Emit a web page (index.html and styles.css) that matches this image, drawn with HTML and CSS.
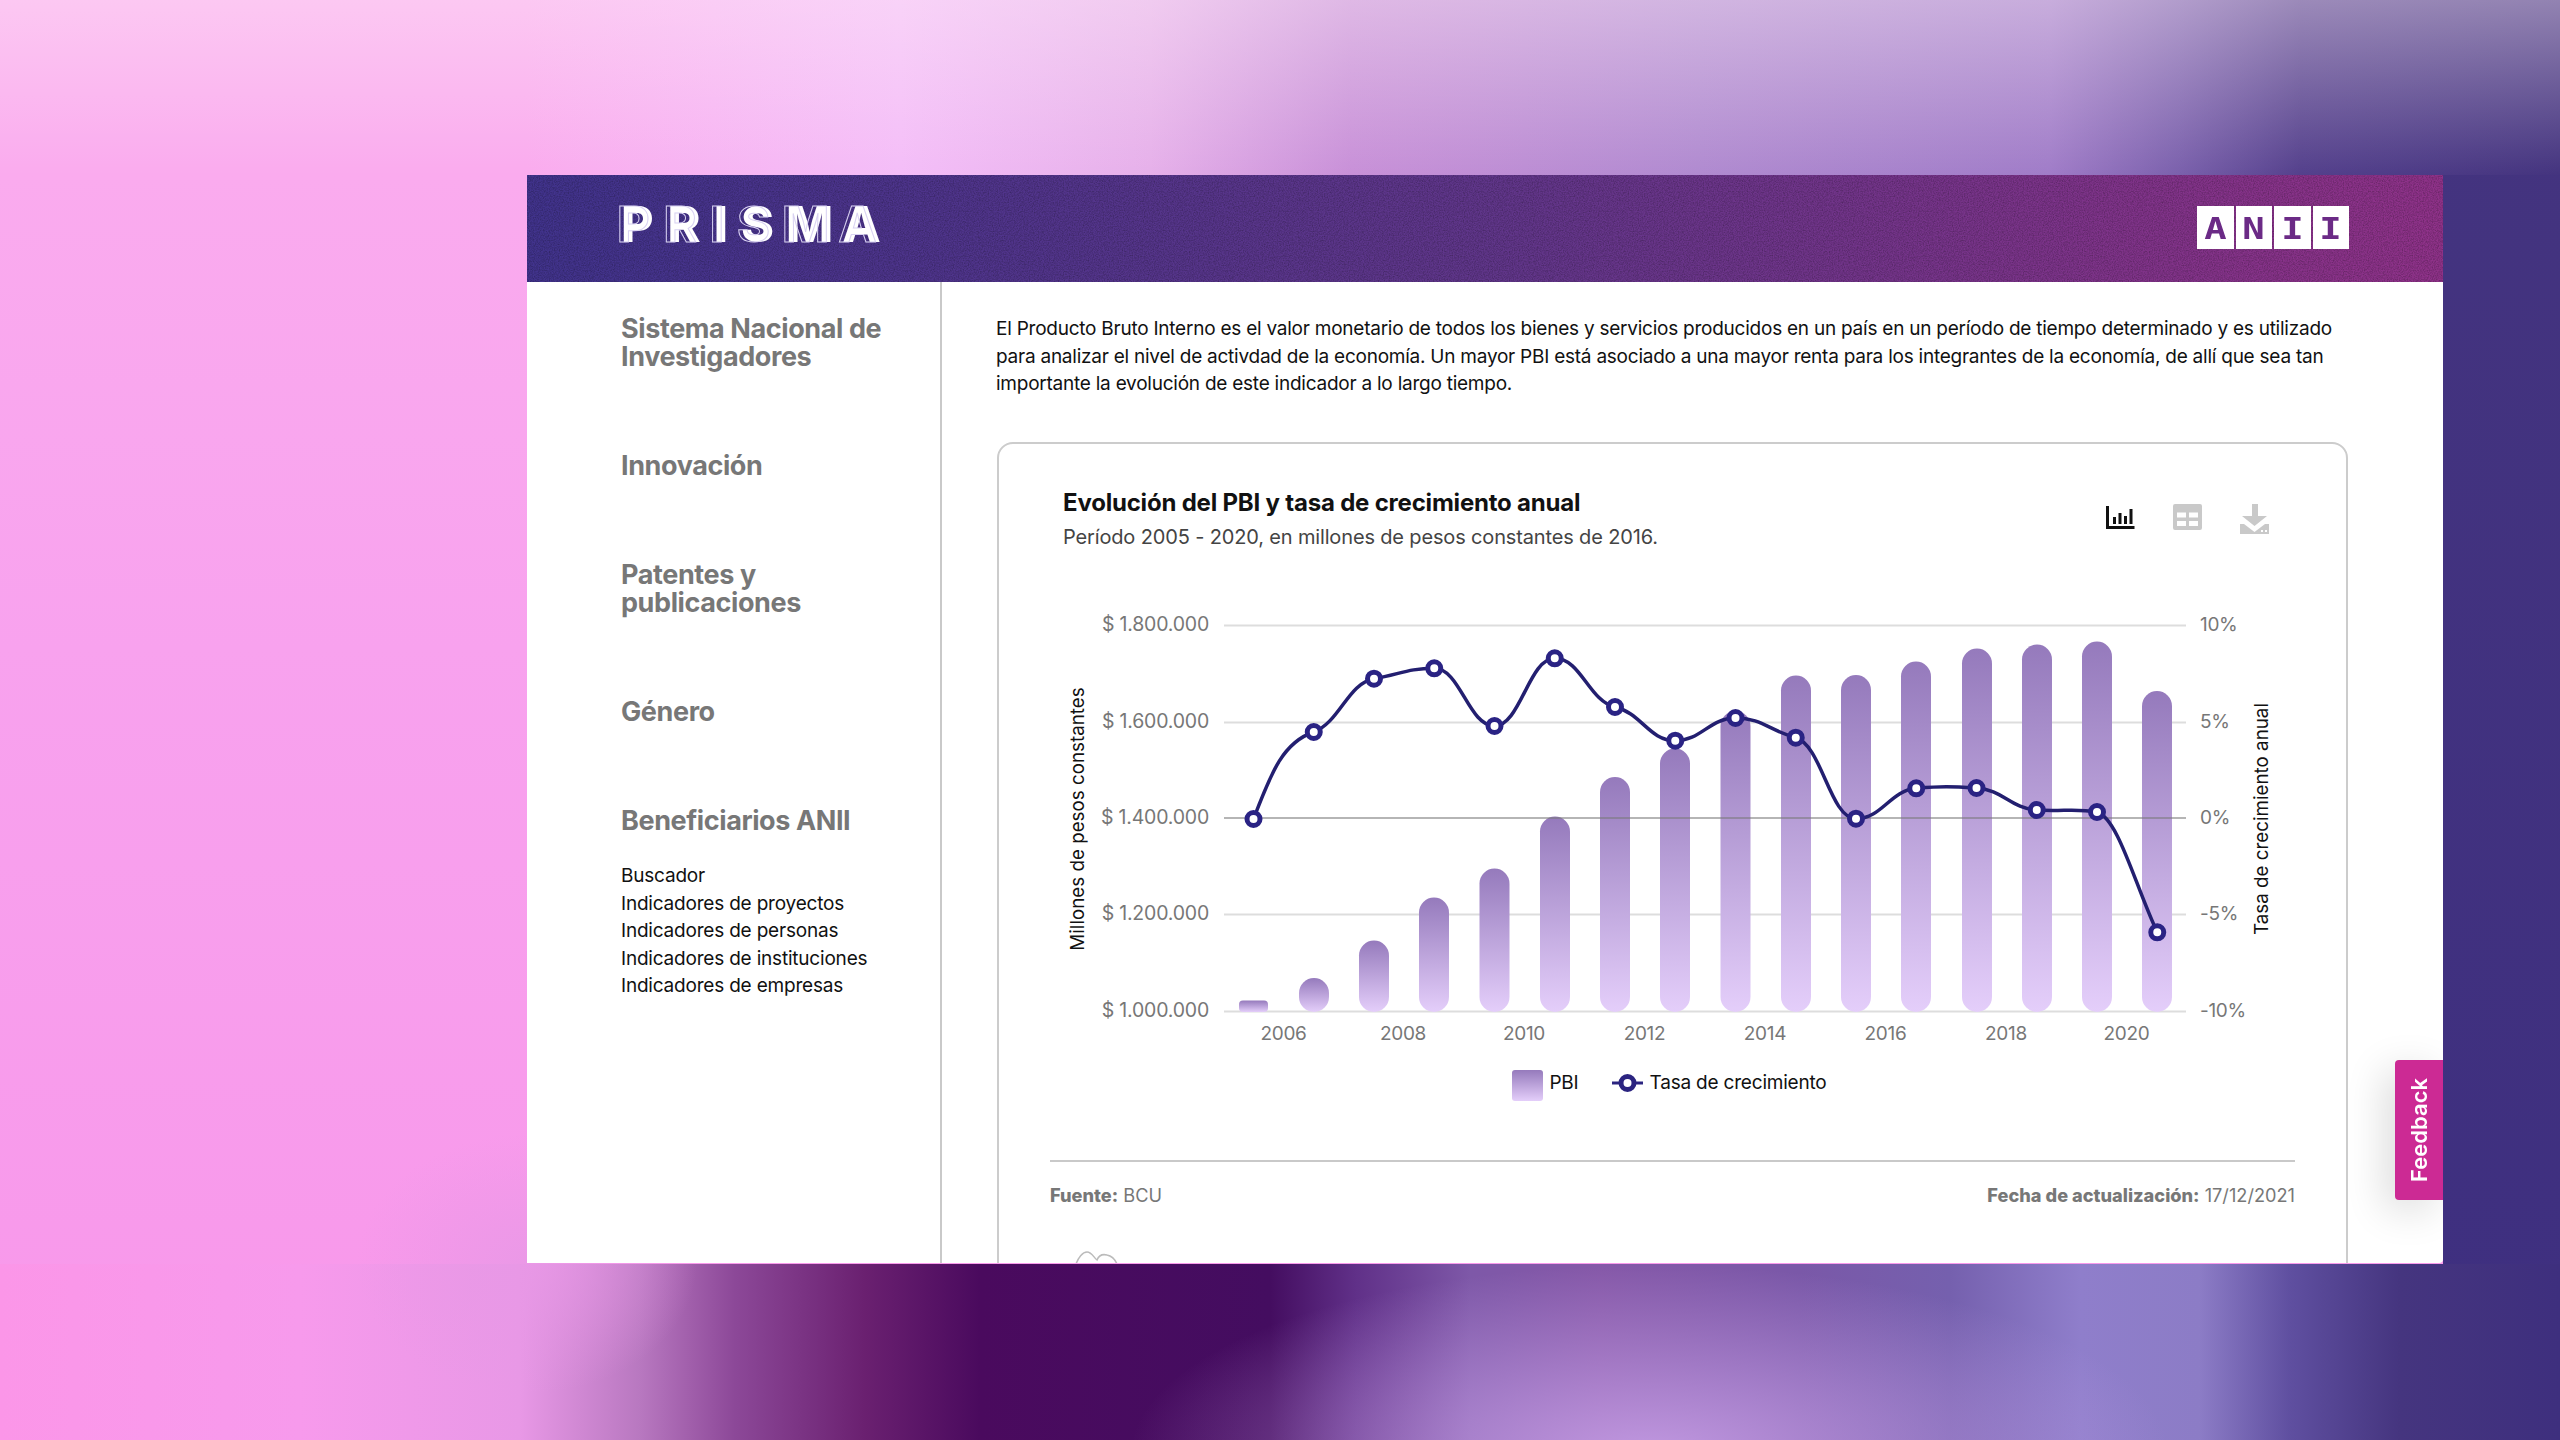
FILE: index.html
```html
<!DOCTYPE html>
<html lang="es">
<head>
<meta charset="utf-8">
<title>PRISMA</title>
<link rel="stylesheet" href="styles.css">
</head>
<body>
<div class="desktop">
  <div class="window">
    <header class="topbar">
      <svg class="grain" width="1916" height="107"><filter id="noise"><feTurbulence type="fractalNoise" baseFrequency="0.8" numOctaves="2" stitchTiles="stitch"/><feColorMatrix values="0 0 0 0 0  0 0 0 0 0  0 0 0 0 0  0 0 0 1.6 -0.55"/></filter><rect width="1916" height="107" filter="url(#noise)" opacity="0.3"/></svg>
      <div class="prisma">
        <span class="pl pl-p" data-l="P">P</span><span class="pl pl-r" data-l="R">R</span><span class="pl pl-i" data-l="I">I</span><span class="pl pl-s" data-l="S">S</span><span class="pl pl-m" data-l="M">M</span><span class="pl pl-a" data-l="A">A</span>
      </div>
      <div class="anii"><span><i>A</i></span><span><i>N</i></span><span><i>I</i></span><span><i>I</i></span></div>
    </header>
    <div class="content">
      <nav class="sidebar">
        <h2 class="nav-h">Sistema Nacional de Investigadores</h2>
        <h2 class="nav-h">Innovación</h2>
        <h2 class="nav-h">Patentes y publicaciones</h2>
        <h2 class="nav-h">Género</h2>
        <div>
          <h2 class="nav-h">Beneficiarios ANII</h2>
          <ul class="nav-list">
            <li>Buscador</li>
            <li>Indicadores de proyectos</li>
            <li>Indicadores de personas</li>
            <li>Indicadores de instituciones</li>
            <li>Indicadores de empresas</li>
          </ul>
        </div>
      </nav>
      <main class="main">
        <p class="intro">El Producto Bruto Interno es el valor monetario de todos los bienes y servicios producidos en un país en un período de tiempo determinado y es utilizado para analizar el nivel de activdad de la economía. Un mayor PBI está asociado a una mayor renta para los integrantes de la economía, de allí que sea tan importante la evolución de este indicador a lo largo tiempo.</p>
        <section class="card">
          <div class="card-head">
            <div>
              <h1 class="card-title">Evolución del PBI y tasa de crecimiento anual</h1>
              <p class="card-sub">Período 2005 - 2020, en millones de pesos constantes de 2016.</p>
            </div>
            <div class="tools">
              <svg class="tool" width="29" height="26" viewBox="0 0 29 26"><path d="M1.500 2v21.500H28.500" fill="none" stroke="#111" stroke-width="3"/><path d="M7 13h3v7H7zM12.500 9h3v11h-3zM18 12h3v8h-3zM23.500 5h3v15h-3z" fill="#111"/></svg>
              <svg class="tool" width="29" height="26" viewBox="0 0 29 26"><path fill-rule="evenodd" d="M2 0h25a2 2 0 0 1 2 2v22a2 2 0 0 1-2 2H2a2 2 0 0 1-2-2V2a2 2 0 0 1 2-2zM4 8.500v5h9v-5zM16 8.500v5h9v-5zM4 17v5h9v-5zM16 17v5h9v-5z" fill="#c9c9c9"/></svg>
              <svg class="tool" width="29" height="30" viewBox="0 0 29 30"><path d="M12 0h6v12h9l-12.500 10L2 12h10z" fill="#c9c9c9"/><path fill-rule="evenodd" d="M0 20h4l10.500 8 10.500-8h4v10H0zM21 26v2h2v-2zM25 26v2h2v-2z" fill="#c9c9c9"/></svg>
            </div>
          </div>
          <svg class="chart" width="1244" height="450" viewBox="1050 600 1244 450">
            <defs>
              <linearGradient id="bar" x1="0" y1="0" x2="0" y2="1">
                <stop offset="0" stop-color="#957abc"/>
                <stop offset="1" stop-color="#e4cefa"/>
              </linearGradient>
            </defs>
            <g class="grid">
              <line x1="1224" x2="2186" y1="625.500" y2="625.500"/>
              <line x1="1224" x2="2186" y1="722.500" y2="722.500"/>
              <line x1="1224" x2="2186" y1="914.500" y2="914.500"/>
              <line x1="1224" x2="2186" y1="1011.500" y2="1011.500"/>
            </g>
            <g fill="url(#bar)">
              <rect x="1239" y="1000.500" width="29" height="11.500" rx="4"/>
              <rect x="1299" y="978" width="30" height="34" rx="15"/>
              <rect x="1359" y="940.500" width="30" height="71.500" rx="15"/>
              <rect x="1419" y="897.500" width="30" height="114.500" rx="15"/>
              <rect x="1479.500" y="868.500" width="30" height="143.500" rx="15"/>
              <rect x="1540" y="816.500" width="30" height="195.500" rx="15"/>
              <rect x="1600" y="777" width="30" height="235" rx="15"/>
              <rect x="1660" y="748.500" width="30" height="263.500" rx="15"/>
              <rect x="1720.500" y="711" width="30" height="301" rx="15"/>
              <rect x="1781" y="675.500" width="30" height="336.500" rx="15"/>
              <rect x="1841" y="675" width="30" height="337" rx="15"/>
              <rect x="1901" y="661.500" width="30" height="350.500" rx="15"/>
              <rect x="1962" y="648.500" width="30" height="363.500" rx="15"/>
              <rect x="2022" y="644.500" width="30" height="367.500" rx="15"/>
              <rect x="2082" y="641.500" width="30" height="370.500" rx="15"/>
              <rect x="2142" y="691" width="30" height="321" rx="15"/>
            </g>
            <line class="zero" x1="1224" x2="2186" y1="818" y2="818"/>
            <path class="rate" d="M1253.500 819C1272 770 1284 742 1313.750 732C1339.750 722.200 1348 683.200 1374 678.700C1400 674.200 1408.250 668.300 1434.250 668.300C1460.250 668.300 1468.500 726 1494.500 726C1520.500 726 1528.750 658.300 1554.750 658.300C1580.750 658.300 1589 701.200 1615 707C1641 712.800 1649.250 740.700 1675.250 740.700C1701.250 740.700 1709.500 718 1735.500 718C1761.500 718 1769.750 730.700 1795.750 737.700C1821.750 744.700 1830 818.700 1856 818.700C1882 818.700 1890.250 790.300 1916.250 788.300C1942.250 786.300 1950.500 786.500 1976.500 788C2002.500 789.500 2010.750 808.300 2036.750 810C2062.750 811.700 2075 808 2097 812C2118 818 2135 885 2157.250 932.300"/>
            <g class="dots">
              <circle cx="1253.500" cy="819" r="6.500"/><circle cx="1313.750" cy="732" r="6.500"/><circle cx="1374" cy="678.700" r="6.500"/><circle cx="1434.250" cy="668.300" r="6.500"/><circle cx="1494.500" cy="726" r="6.500"/><circle cx="1554.750" cy="658.300" r="6.500"/><circle cx="1615" cy="707" r="6.500"/><circle cx="1675.250" cy="740.700" r="6.500"/><circle cx="1735.500" cy="718" r="6.500"/><circle cx="1795.750" cy="737.700" r="6.500"/><circle cx="1856" cy="818.700" r="6.500"/><circle cx="1916.250" cy="788.300" r="6.500"/><circle cx="1976.500" cy="788" r="6.500"/><circle cx="2036.750" cy="810" r="6.500"/><circle cx="2097" cy="812" r="6.500"/><circle cx="2157.250" cy="932.300" r="6.500"/>
            </g>
            <g class="ax-l">
              <text x="1209" y="630.500">$ 1.800.000</text>
              <text x="1209" y="727.500">$ 1.600.000</text>
              <text x="1209" y="823.500">$ 1.400.000</text>
              <text x="1209" y="920">$ 1.200.000</text>
              <text x="1209" y="1016.500">$ 1.000.000</text>
            </g>
            <g class="ax-r">
              <text x="2200" y="630.500">10%</text>
              <text x="2200" y="727.500">5%</text>
              <text x="2200" y="823.500">0%</text>
              <text x="2200" y="920">-5%</text>
              <text x="2200" y="1016.500">-10%</text>
            </g>
            <g class="ax-x">
              <text x="1283.500" y="1040">2006</text>
              <text x="1403" y="1040">2008</text>
              <text x="1524" y="1040">2010</text>
              <text x="1644.500" y="1040">2012</text>
              <text x="1765" y="1040">2014</text>
              <text x="1885.500" y="1040">2016</text>
              <text x="2006" y="1040">2018</text>
              <text x="2126.500" y="1040">2020</text>
            </g>
            <text class="ax-title" transform="translate(1084 819) rotate(-90)">Millones de pesos constantes</text>
            <text class="ax-title" transform="translate(2268 819) rotate(-90)">Tasa de crecimiento anual</text>
          </svg>
          <div class="legend">
            <span class="swatch"></span><span class="leg-t">PBI</span>
            <svg class="leg-line" width="31" height="20" viewBox="0 0 31 20"><path d="M0 10h31" stroke="#2b2480" stroke-width="3"/><circle cx="15.500" cy="10" r="6.500" fill="#fff" stroke="#2b2480" stroke-width="5"/></svg>
            <span class="leg-t">Tasa de crecimiento</span>
          </div>
          <div class="foot">
            <span><b>Fuente:</b> BCU</span>
            <span><b>Fecha de actualización:</b> 17/12/2021</span>
          </div>
          <svg class="next" width="46" height="16" viewBox="0 0 46 16"><path d="M1 16C4 6 9 1 13 1C18 1 20 7 23 9C25 4 29 3 33 4C38 5 42 9 44 16" fill="none" stroke="#bbb" stroke-width="1.500"/></svg>
        </section>
      </main>
      <div class="feedback"><span>Feedback</span></div>
    </div>
  </div>
</div>
</body>
</html>
```
FILE: styles.css
```css
* { box-sizing: border-box; }
html, body { margin: 0; padding: 0; }
body { font-family: Inter, "Liberation Sans", sans-serif; color: #111; }
.desktop {
  width: 2560px; height: 1440px; overflow: hidden; padding: 175px 0 0 527px;
  background-repeat: no-repeat;
  background-image:
    radial-gradient(ellipse 520px 190px at 1650px 1455px, rgba(208,168,238,.8) 0%, rgba(208,168,238,0) 100%),
    radial-gradient(ellipse 170px 130px at 527px 1264px, rgba(232,152,230,.85) 0%, rgba(232,152,230,0) 100%),
    linear-gradient(180deg, rgba(255,240,248,.42) 0, rgba(255,240,248,0) 100%),
    linear-gradient(90deg, #faabee 0, #faabee 527px, #f4bdf8 900px, #e6b0ea 1150px, #c890d8 1350px, #b08ad0 1700px, #a07cc8 2050px, #7a60ac 2180px, #54408c 2300px, #44347f 2560px),
    linear-gradient(90deg, #fb96e8 0, #f79aec 300px, #e898e6 520px, #b878c0 640px, #8c4898 735px, #6a2070 865px, #4a0a5e 980px, #440d60 1270px, #603088 1355px, #7e58a8 1470px, #8558a8 1600px, #7a58a8 1800px, #7560ae 1950px, #8f7ecb 2080px, #8c7cc6 2200px, #5f4fa0 2290px, #45357f 2400px, #3e2f7e 2560px),
    linear-gradient(180deg, #44347f 0, #3e2f80 100%),
    linear-gradient(180deg, #faabee 0, #faabee 175px, #f8a2ee 45%, #f897ea 100%);
  background-size:
    100% 100%, 100% 100%, 100% 175px, 100% 175px, 100% 176px, 117px 100%, 100% 100%;
  background-position:
    0 0, 0 0, 0 0, 0 0, 0 1264px, 100% 0, 0 0;
}
.window { width: 1916px; height: 1088px; background: #fff; display: flex; flex-direction: column; overflow: hidden; border-radius: 0 0 4px 0; }
.topbar {
  position: relative;
  height: 107px; flex: none; display: flex; align-items: center; justify-content: space-between;
  padding: 0 94px;
  background: linear-gradient(90deg, #41338c 0%, #60368a 50%, #8f3289 100%);
}
.grain { position: absolute; left: 0; top: 0; display: block; pointer-events: none; }
.prisma { position: relative; display: flex; margin-bottom: 9px; font-size: 50px; font-weight: 800; color: #fff; line-height: 36px; font-family: Inter, sans-serif; }
.pl { position: relative; display: block; }
.pl::before { content: attr(data-l); position: absolute; left: -4px; top: 0; color: transparent; -webkit-text-stroke: 1px #d9d2f2; }
.pl-p { margin-right: 14px; } .pl-r { margin-right: 13px; } .pl-i { margin-right: 13px; } .pl-s { margin-right: 12px; } .pl-m { margin-right: 9px; }
.anii { position: relative; display: flex; gap: 2px; height: 43px; margin-bottom: 2px; }
.anii span { width: 36.500px; background: #fff; color: #6b2a86; display: flex; align-items: center; justify-content: center; font: 700 31px "DejaVu Sans Mono", monospace; }
.anii i { font-style: normal; transform: scaleX(1.2); display: block; }
.content { flex: 1; display: flex; min-height: 0; position: relative; }
.sidebar { width: 415px; flex: none; border-right: 2px solid #c9c9c9; padding: 33px 40px 0 94px; display: flex; flex-direction: column; gap: 81px; }
.nav-h { margin: 0; font-size: 27px; line-height: 28px; font-weight: 700; color: #777; letter-spacing: -.4px; }
.nav-list { list-style: none; margin: 27px 0 0; padding: 0; font-size: 19px; line-height: 27.500px; color: #111; letter-spacing: -.2px; }
.main { flex: 1; padding: 33px 0 0 54px; min-width: 0; }
.intro { margin: 0; width: 1352px; font-size: 19px; line-height: 27.500px; color: #111; letter-spacing: -.24px; }
.card { margin: 44px 0 0 1px; width: 1351px; height: 1000px; border: 2px solid #ccc; border-radius: 16px; padding: 0 51px; }
.card-head { display: flex; justify-content: space-between; padding: 45px 26px 0 13px; height: 107px; }
.card-title { margin: 0; font-size: 24px; line-height: 28px; font-weight: 700; color: #111; letter-spacing: -.2px; }
.card-sub { margin: 6px 0 0; font-size: 20px; line-height: 28px; color: #444; letter-spacing: -.15px; }
.tools { display: flex; gap: 38px; align-items: flex-start; margin-top: 15px; }
.tool { display: block; flex: none; }
.chart { display: block; margin-top: 49px; }
.grid line { stroke: #ddd; stroke-width: 2; }
.zero { stroke: rgba(120,120,120,.55); stroke-width: 2; }
.rate { fill: none; stroke: #231f70; stroke-width: 3.500; }
.dots circle { fill: #fff; stroke: #2a2384; stroke-width: 5; }
.chart text { font-family: Inter, sans-serif; }
.ax-l text { font-size: 19.500px; fill: #777; text-anchor: end; letter-spacing: -.2px; }
.ax-r text { font-size: 19px; fill: #777; letter-spacing: -.3px; }
.ax-x text { font-size: 19px; fill: #777; text-anchor: middle; letter-spacing: -.3px; }
.ax-title { font-size: 18.800px; fill: #111; text-anchor: middle; }
.legend { margin-top: 20px; height: 31px; display: flex; align-items: flex-start; justify-content: center; padding-right: 6px; font-size: 19px; line-height: 26px; }
.swatch { width: 31px; height: 31px; border-radius: 3px; background: linear-gradient(#957abc, #e4cefa); margin-right: 6px; }
.leg-t { color: #111; letter-spacing: -.2px; }
.leg-line { margin: 3px 7px 0 33px; display: block; }
.foot { margin-top: 59px; border-top: 2px solid #c9c9c9; padding-top: 21px; display: flex; justify-content: space-between; font-size: 18.200px; line-height: 24px; color: #777; }
.foot b { font-weight: 800; color: #777; }
.next { display: block; margin: 44px 0 0 24px; }
.feedback {
  position: absolute; right: 0; top: 778px; width: 48px; height: 140px;
  background: #cc2a94; border-radius: 4px 0 0 4px; display: flex; align-items: center; justify-content: center;
  box-shadow: -10px 10px 40px rgba(0,0,0,.14);
}
.feedback span { color: #fff; font-size: 22px; font-weight: 600; writing-mode: vertical-rl; transform: rotate(180deg); }
```
